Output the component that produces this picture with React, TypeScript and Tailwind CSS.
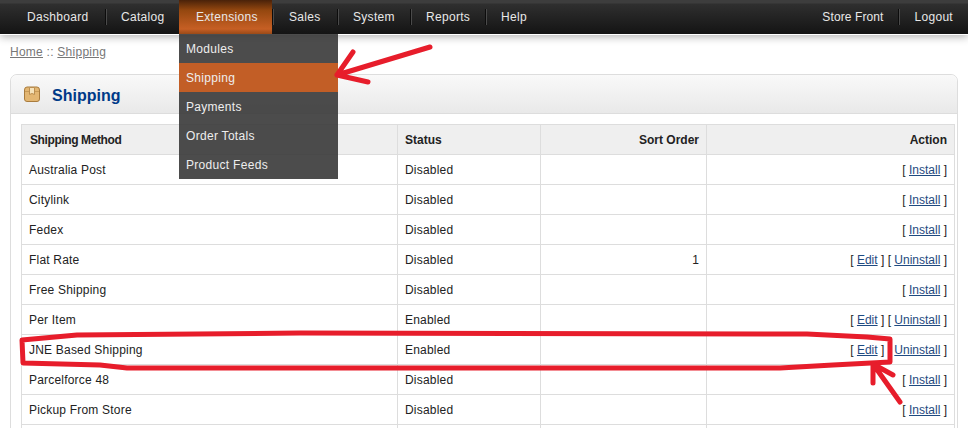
const font = { fontFamily: '"Liberation Sans", Arial, sans-serif' };

const rows = [
  { name: 'Australia Post', status: 'Disabled', sort: '', installed: false },
  { name: 'Citylink', status: 'Disabled', sort: '', installed: false },
  { name: 'Fedex', status: 'Disabled', sort: '', installed: false },
  { name: 'Flat Rate', status: 'Disabled', sort: '1', installed: true },
  { name: 'Free Shipping', status: 'Disabled', sort: '', installed: false },
  { name: 'Per Item', status: 'Enabled', sort: '', installed: true },
  { name: 'JNE Based Shipping', status: 'Enabled', sort: '', installed: true },
  { name: 'Parcelforce 48', status: 'Disabled', sort: '', installed: false },
  { name: 'Pickup From Store', status: 'Disabled', sort: '', installed: false },
];

const leftNav = [
  { label: 'Dashboard', cls: 'w-[105px] pl-[27px]', sep: true },
  { label: 'Catalog', cls: 'w-[73px] pl-[15px]', sep: false },
  { label: 'Extensions', cls: 'w-[93px] pl-[17px] bg-[linear-gradient(to_bottom,#4a2209,#94470f_30%,#c65f24_85%,#9a4a18)]', sep: true },
  { label: 'Sales', cls: 'w-[64px] pl-[16px]', sep: true },
  { label: 'System', cls: 'w-[72px] pl-[15px]', sep: true },
  { label: 'Reports', cls: 'w-[74px] pl-[15px]', sep: true },
  { label: 'Help', cls: 'w-[60px] pl-[15px]', sep: false },
];

const menuItems = ['Modules', 'Shipping', 'Payments', 'Order Totals', 'Product Feeds'];

function Separator() {
  return <span className="h-[16px] w-px bg-[#0c0c0c] shadow-[1px_0_0_#4a4a4a]" />;
}

function Action({ label }: { label: string }) {
  return (
    <>
      [ <a className="text-[#1f4a80] underline">{label}</a> ]
    </>
  );
}

export default function App() {
  return (
    <div className="relative h-[428px] w-[968px] overflow-hidden bg-white text-[12px] tracking-[0.2px] text-[#222]" style={font}>
      {/* top bar */}
      <div className="h-[35px] border-b border-white bg-[linear-gradient(to_bottom,#3d3d3d_0,#3d3d3d_3px,#2f2f2f_4px,#141414_100%)] shadow-[0_2px_8px_rgba(0,0,0,0.3)]">
        <div className="flex h-[34px] items-center justify-between tracking-[0.3px] text-[#e8e8e8]">
          <div className="flex h-full items-center">
            {leftNav.map((item) => (
              <div key={item.label} className="flex h-full items-center">
                <div className={`flex h-full items-center ${item.cls}`}>{item.label}</div>
                {item.sep && <Separator />}
              </div>
            ))}
          </div>
          <div className="flex h-full items-center">
            <div className="pr-[15px] tracking-[0.1px]">Store Front</div>
            <Separator />
            <div className="pl-[15px] pr-[15px]">Logout</div>
          </div>
        </div>
      </div>

      {/* breadcrumb */}
      <div className="mt-[10px] h-[29px] pl-[10px] leading-[14px] tracking-[0.25px] text-[#777]">
        <a className="underline">Home</a> :: <a className="underline">Shipping</a>
      </div>

      {/* panel */}
      <div className="mx-[10px] rounded-t-[7px] border border-[#ddd]">
        <div className="flex h-[39px] items-center gap-[12px] rounded-t-[7px] border-b border-[#ddd] bg-gradient-to-b from-[#f9f9f9] to-[#e9e9e9] pl-[13px] pt-[4px]">
          <svg className="-mt-[4px]" width="16" height="16" viewBox="0 0 16 16">
            <path d="M3 1 H13 Q15.5 1 15.5 4 V13 Q15.5 15.5 13 15.5 H3 Q0.5 15.5 0.5 13 V4 Q0.5 1 3 1 Z" fill="#e3b672" stroke="#a97c3e" />
            <path d="M1 5.5 H15" stroke="#c79a58" />
            <path d="M5.5 1.5 H10.5 V8.5 L8 7.5 L5.5 8.5 Z" fill="#f5e2ba" stroke="#bb8e50" />
          </svg>
          <span className="text-[16px] font-bold tracking-normal text-[#003a88]">Shipping</span>
        </div>
        <div className="px-[10px] pt-[10px]">
          <table className="w-[934px] table-fixed border-collapse">
            <thead>
              <tr className="h-[30px] bg-[#efefef] font-bold tracking-normal">
                <th className="w-[376px] border border-[#ddd] pl-[8px] text-left tracking-[-0.4px]">Shipping Method</th>
                <th className="w-[143px] border border-[#ddd] pl-[7px] text-left">Status</th>
                <th className="w-[166px] border border-[#ddd] pr-[7px] text-right">Sort Order</th>
                <th className="border border-[#ddd] pr-[7px] text-right">Action</th>
              </tr>
            </thead>
            <tbody>
              {rows.map((row) => (
                <tr key={row.name} className="h-[30px]">
                  <td className="border border-[#ddd] pl-[7px]">{row.name}</td>
                  <td className="border border-[#ddd] pl-[7px]">{row.status}</td>
                  <td className="border border-[#ddd] pr-[7px] text-right">{row.sort}</td>
                  <td className="border border-[#ddd] pr-[7px] text-right tracking-normal">
                    {row.installed ? (
                      <>
                        <Action label="Edit" /> <Action label="Uninstall" />
                      </>
                    ) : (
                      <Action label="Install" />
                    )}
                  </td>
                </tr>
              ))}
              {/* next row starts right at the bottom edge of the window */}
              <tr className="h-[30px]">
                <td className="border border-[#ddd]" />
                <td className="border border-[#ddd]" />
                <td className="border border-[#ddd]" />
                <td className="border border-[#ddd]" />
              </tr>
            </tbody>
          </table>
        </div>
      </div>

      {/* open dropdown */}
      <div className="absolute left-[179px] top-[34px] w-[159px] bg-[#383838]/90 tracking-[0.3px] text-[#eee]">
        {menuItems.map((item) => (
          <div key={item} className={`flex h-[29px] items-center pl-[7px] ${item === 'Shipping' ? 'bg-[#c25e26]' : ''}`}>
            {item}
          </div>
        ))}
      </div>

      {/* red annotations */}
      <svg className="absolute left-0 top-0" width="968" height="428" fill="none" stroke="#e71d2b" strokeWidth="5" strokeLinecap="round" strokeLinejoin="round">
        <path d="M430 47 L337 75 M353 52 L337 75 L368 82" />
        <path d="M22 340 L77 335 L300 333 L807 334 L867 337 L890 339 L890 362 L833 365 L780 368 L127 368 L100 365 L23 363 Z" />
        <path d="M900 402 L873 364 M873 383 L873 364 L893 375" />
      </svg>
    </div>
  );
}
